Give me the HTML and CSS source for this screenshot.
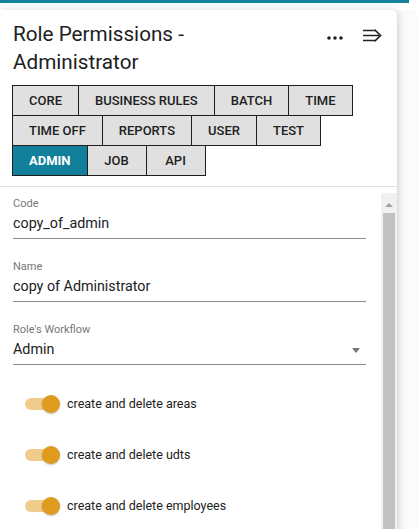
FILE: index.html
```html
<!DOCTYPE html>
<html lang="en">
<head>
<meta charset="utf-8">
<title>Role Permissions</title>
<link rel="stylesheet" href="styles.css">
</head>
<body>
<div class="topbar"></div>
<div class="stage">
  <section class="card">
    <header class="card-head">
      <div class="title-row">
        <h1 class="title">Role Permissions - Administrator</h1>
        <div class="actions">
          <svg class="icon-dots" width="16" height="6" viewBox="0 0 16 6"><circle cx="2" cy="3" r="1.8"/><circle cx="8" cy="3" r="1.8"/><circle cx="14" cy="3" r="1.8"/></svg>
          <svg class="icon-arrow" width="19" height="14" viewBox="0 0 19 14"><path d="M0 1.5H12.5M0 6.5H16M0 11.5H12.5M11.5 0.6L17.6 6.5L11.5 12.4"/></svg>
        </div>
      </div>
      <nav class="tabs">
        <span class="tab">CORE</span>
        <span class="tab">BUSINESS RULES</span>
        <span class="tab">BATCH</span>
        <span class="tab">TIME</span>
        <span class="tab">TIME OFF</span>
        <span class="tab">REPORTS</span>
        <span class="tab">USER</span>
        <span class="tab">TEST</span>
        <span class="tab active">ADMIN</span>
        <span class="tab">JOB</span>
        <span class="tab">API</span>
      </nav>
    </header>
    <div class="card-body">
      <div class="form">
        <div class="field">
          <div class="label">Code</div>
          <div class="value">copy_of_admin</div>
        </div>
        <div class="field">
          <div class="label">Name</div>
          <div class="value">copy of Administrator</div>
        </div>
        <div class="field">
          <div class="label">Role's Workflow</div>
          <div class="value select">Admin<span class="caret"></span></div>
        </div>
        <div class="toggles">
          <div class="toggle-row"><span class="switch"><span class="track"></span><span class="thumb"></span></span><span class="toggle-label">create and delete areas</span></div>
          <div class="toggle-row"><span class="switch"><span class="track"></span><span class="thumb"></span></span><span class="toggle-label">create and delete udts</span></div>
          <div class="toggle-row"><span class="switch"><span class="track"></span><span class="thumb"></span></span><span class="toggle-label">create and delete employees</span></div>
        </div>
      </div>
      <div class="scrollbar">
        <span class="sb-arrow"></span>
        <span class="sb-thumb"></span>
      </div>
    </div>
  </section>
  <aside class="side"></aside>
</div>
</body>
</html>
```
FILE: styles.css
```css
* { box-sizing: border-box; }
html, body { margin: 0; height: 529px; overflow: hidden; }
body {
  background: #ffffff;
  font-family: Roboto, "Noto Sans", "Liberation Sans", sans-serif;
  color: #212121;
}
.topbar { height: 3px; width: 409px; background: #15809b; }
.stage { display: flex; padding-top: 7px; height: 526px; }
.card {
  width: 397px;
  height: 530px;
  background: #fff;
  border-radius: 0 6px 0 0;
  box-shadow: 1px 1px 9px rgba(0, 0, 0, 0.2);
  display: flex;
  flex-direction: column;
  position: relative;
  z-index: 1;
}
.side { flex: 1; background: #fbfbfb; }
.card-head {
  padding: 10px 11px 11px 12px;
  border-bottom: 1px solid #e0e0e0;
}
.title-row { display: flex; align-items: flex-start; }
.title {
  margin: 0 0 9px 1px;
  font-size: 20.7px;
  line-height: 28px;
  font-weight: 400;
  max-width: 290px;
  color: #212121;
}
.actions {
  display: flex;
  align-items: center;
  gap: 20px;
  padding-top: 9px;
  margin-left: auto;
  margin-right: 4px;
}
.icon-dots { fill: #222; margin-top: 3px; }
.icon-arrow { fill: none; stroke: #222; stroke-width: 1.6; }
.tabs { display: flex; flex-wrap: wrap; padding-right: 1px; }
.tab {
  display: block;
  height: 31px;
  min-width: 60px;
  text-align: center;
  line-height: 29px;
  padding: 0 16px;
  border: 1px solid #1e1e1e;
  margin: 0 -1px -1px 0;
  background: #e0e0e0;
  font-size: 13px;
  font-weight: 500;
  color: #212121;
  white-space: nowrap;
}
.tab.active { background: #13809b; color: #fff; font-weight: 700; }
.card-body { flex: 1; display: flex; margin-top: 6px; min-height: 0; }
.form { flex: 1; padding: 4px 15px 0 13px; }
.field + .field { margin-top: 21px; }
.label { font-size: 11px; line-height: 14px; color: #777; }
.value {
  font-size: 14.3px;
  line-height: 22px;
  padding: 1px 0 4px;
  border-bottom: 1px solid #8c8c8c;
  color: #212121;
  display: flex;
  align-items: center;
}
.select { justify-content: space-between; }
.caret {
  width: 0; height: 0;
  border-left: 4.5px solid transparent;
  border-right: 4.5px solid transparent;
  border-top: 5px solid #757575;
  margin-right: 6px;
  margin-top: 2px;
}
.toggles { margin-top: 13px; }
.toggle-row { height: 51px; display: flex; align-items: center; padding-left: 12px; }
.switch { position: relative; width: 35px; height: 18px; display: block; }
.track {
  position: absolute; left: 0; top: 3px;
  width: 32px; height: 12px; border-radius: 6px;
  background: #f0cc8c;
}
.thumb {
  position: absolute; right: 0; top: 0;
  width: 18px; height: 18px; border-radius: 50%;
  background: #e09a1e;
  box-shadow: 0 1px 2px rgba(0, 0, 0, 0.25);
}
.toggle-label { margin-left: 7px; font-size: 12.5px; color: #212121; }
.scrollbar {
  width: 16px;
  background: #f1f1f1;
  display: flex;
  flex-direction: column;
  align-items: center;
  padding-top: 10px;
}
.sb-arrow {
  width: 0; height: 0;
  border-left: 4px solid transparent;
  border-right: 4px solid transparent;
  border-bottom: 4px solid #a3a3a3;
}
.sb-thumb { margin-top: 6px; width: 12px; flex: 1; background: #c1c1c1; }
```
